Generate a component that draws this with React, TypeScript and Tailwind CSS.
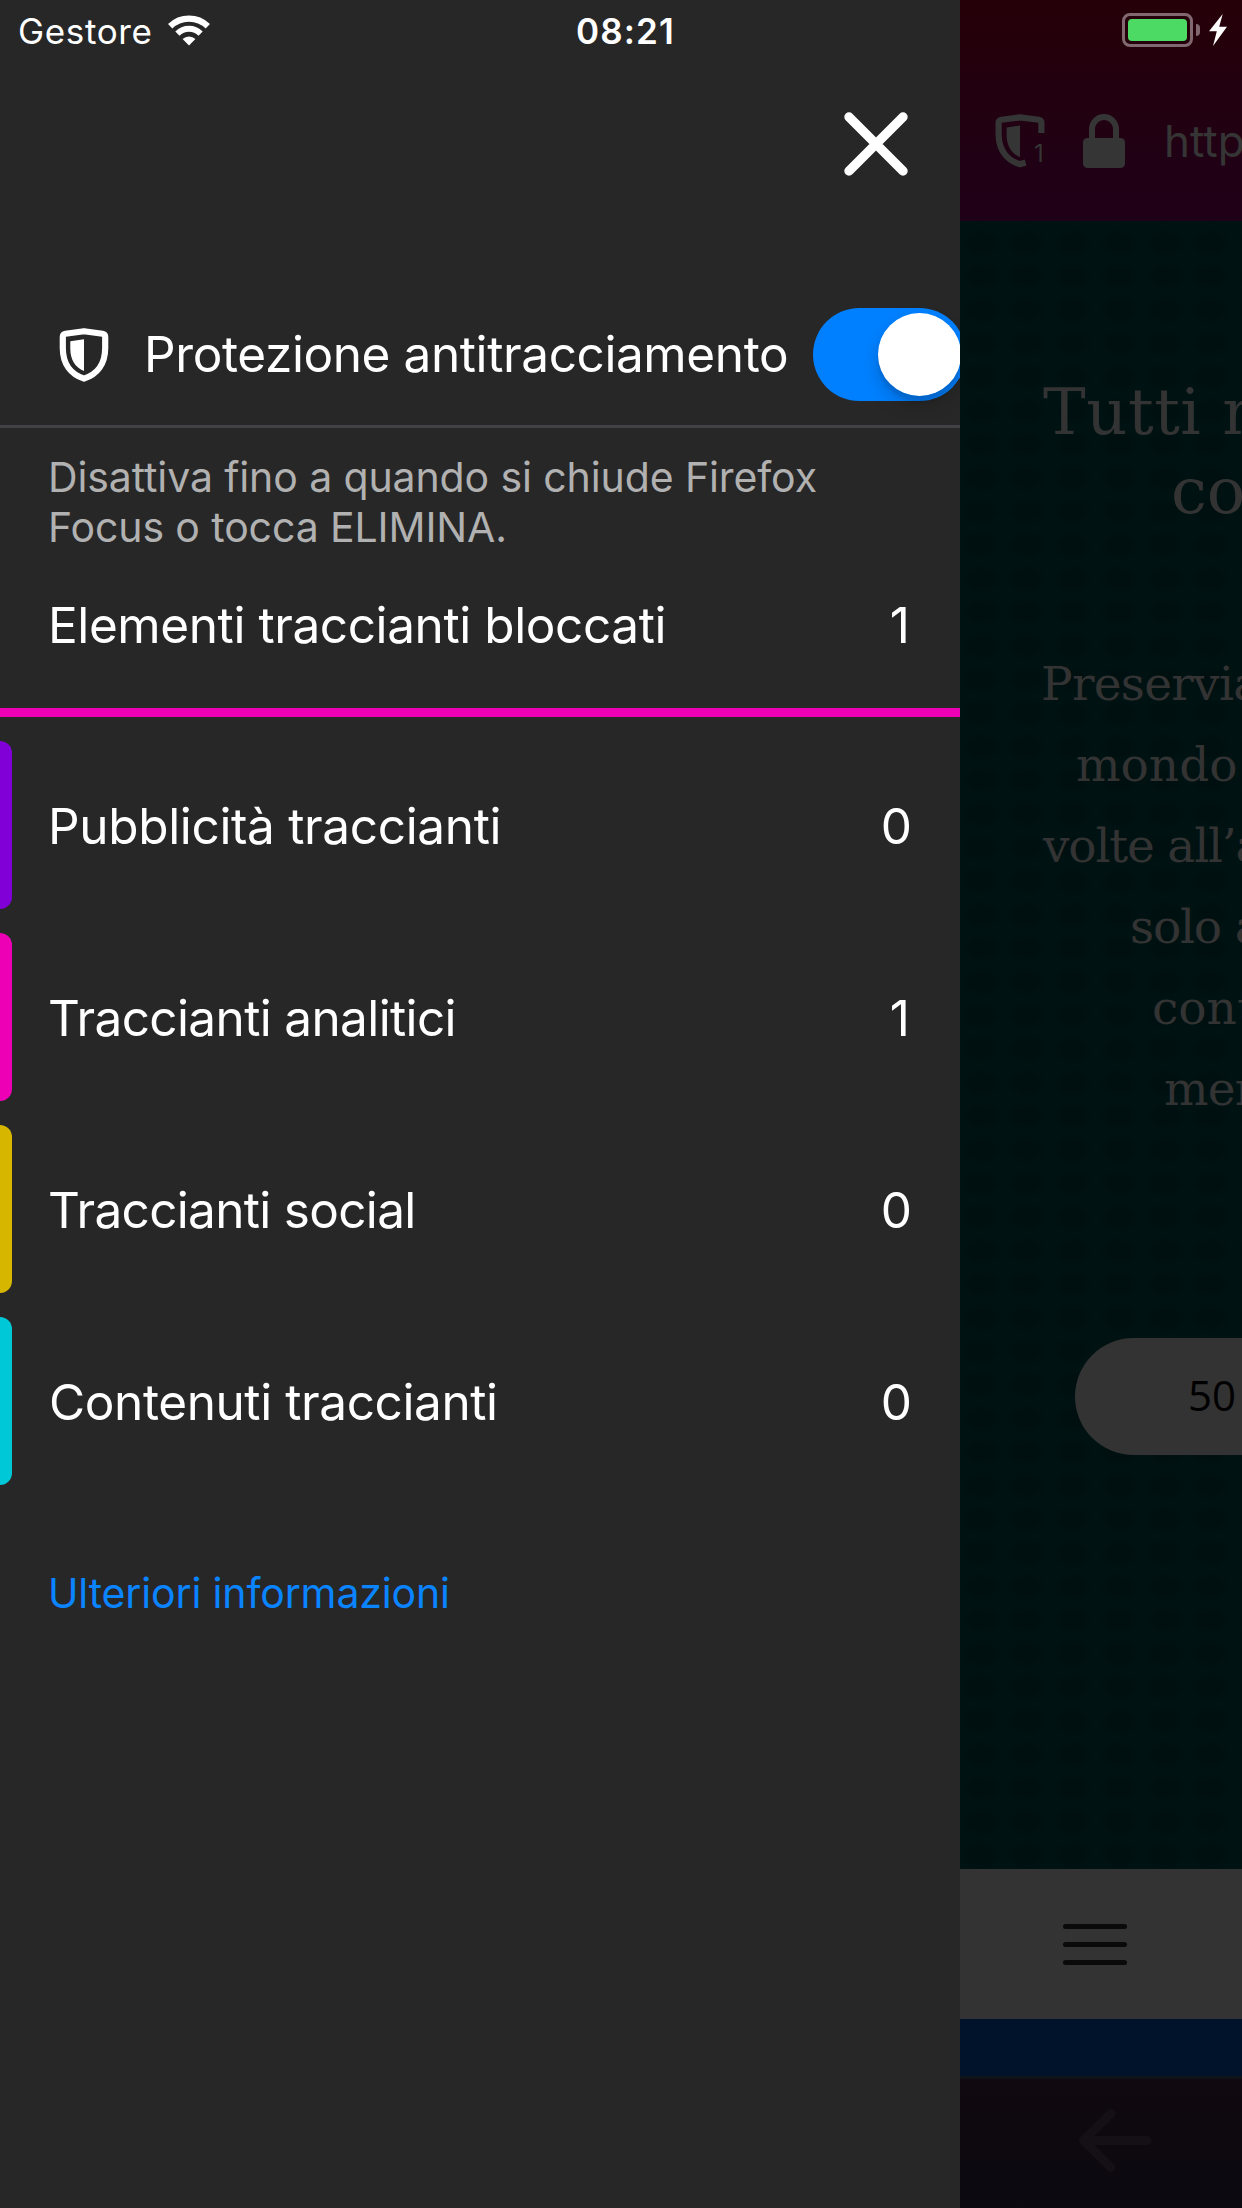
const trackers = [
  { label: 'Pubblicità traccianti', count: 0, bar: 'bg-[#8000d7]', tracking: 'tracking-[-0.34px]', indent: 'pl-[36px]', end: 'pr-[48px]' },
  { label: 'Traccianti analitici', count: 1, bar: 'bg-[#ed00b5]', tracking: 'tracking-[-0.63px]', indent: 'pl-[36px]', end: 'pr-[50px]' },
  { label: 'Traccianti social', count: 0, bar: 'bg-[#d7b600]', tracking: 'tracking-[-0.68px]', indent: 'pl-[36px]', end: 'pr-[48px]' },
  { label: 'Contenuti traccianti', count: 0, bar: 'bg-[#00c8d7]', tracking: 'tracking-[-0.4px]', indent: 'pl-[37px]', end: 'pr-[48px]' },
]

function WifiIcon() {
  return (
    <svg className="shrink-0" width="42" height="31" viewBox="0 0 42 31" fill="none" stroke="currentColor">
      <path d="M2.2 11.3A27 27 0 0 1 39.8 11.3" strokeWidth="6.2" />
      <path d="M9.4 18.6A16.5 16.5 0 0 1 32.6 18.6" strokeWidth="6" />
      <path d="M21 30.5L14.6 24.1A9.2 9.2 0 0 1 27.4 24.1Z" fill="currentColor" stroke="none" />
    </svg>
  )
}

function CloseIcon() {
  return (
    <svg className="shrink-0" width="64" height="64" viewBox="0 0 64 64" fill="none" stroke="currentColor" strokeWidth="9.4" strokeLinecap="round">
      <path d="M5 5L59 59M59 5L5 59" />
    </svg>
  )
}

function ShieldIcon() {
  return (
    <svg className="shrink-0" width="50" height="54" viewBox="0 0 50 54">
      <path
        d="M25 3.2L43.5 5.8Q46.2 6.2 46.2 9V20C46.2 36 38 46.5 25 50.6C12 46.5 3.8 36 3.8 20V9Q3.8 6.2 6.5 5.8Z"
        fill="none" stroke="currentColor" strokeWidth="6.2" strokeLinejoin="round"
      />
      <path d="M25 11.3V43C16 39.5 11.3 31 11.3 21V13.2Z" fill="currentColor" />
    </svg>
  )
}

function ShieldCountIcon() {
  return (
    <svg className="shrink-0" width="50" height="54" viewBox="0 0 50 54">
      <path
        d="M46.4 19V9Q46.4 6.2 43.7 5.8L25 3.4L6.5 5.8Q3.6 6.2 3.6 9V20C3.6 36 12 46.5 25 50.2L30.6 48.6"
        fill="none" stroke="currentColor" strokeWidth="6.2" strokeLinejoin="round"
      />
      <path d="M25 11.5V43C16 39.5 11.6 31 11.6 21V13.4Z" fill="currentColor" />
      <text x="39" y="48" fontSize="24" fill="currentColor" className="font-['Inter',sans-serif]">1</text>
    </svg>
  )
}

function LockIcon() {
  return (
    <svg className="shrink-0" width="42" height="54" viewBox="0 0 42 54">
      <rect x="0" y="24" width="42" height="30" rx="4.5" fill="currentColor" />
      <path d="M9 26V15A12 12 0 0 1 33 15V26" fill="none" stroke="currentColor" strokeWidth="6" />
    </svg>
  )
}

function Battery() {
  return (
    <div className="flex items-center">
      <div className="h-[34px] w-[71px] shrink-0 rounded-[8px] border-3 border-[#816870] p-[3px]">
        <div className="h-full rounded-[4px] bg-[#4cd964]" />
      </div>
      <div className="ml-[3px] h-3 w-1 rounded-r-full bg-[#816870]" />
      <svg className="ml-[9px] shrink-0" width="18" height="32" viewBox="0 0 18 32" fill="#fff">
        <path d="M13.7 0L0 17.2H7.8L4 32L18 12.8H10.2Z" />
      </svg>
    </div>
  )
}

function TrackingPanel() {
  return (
    <section className="flex h-full w-[960px] shrink-0 flex-col overflow-hidden bg-[#272727] font-['Inter',sans-serif] text-white">
      <div className="flex h-[62px] items-center pl-[18px] text-[35px] leading-none">
        <span className="w-[150px] tracking-[0.64px]">Gestore</span>
        <div className="pb-[2px]"><WifiIcon /></div>
        <span className="ml-[366px] font-semibold tracking-[1.14px]">08:21</span>
      </div>
      <div className="flex h-[222px] justify-end pt-[50px] pr-[52px]">
        <CloseIcon />
      </div>
      <div className="flex h-[141px] shrink-0 items-center pl-[59px]">
        <ShieldIcon />
        <h1 className="ml-[35px] w-[669px] shrink-0 pt-px text-[49.5px] leading-none whitespace-nowrap tracking-[-0.4px]">Protezione antitracciamento</h1>
        <div className="flex h-[93px] w-[153px] shrink-0 items-center justify-end rounded-full bg-[#0080ff] pr-[5px]">
          <div className="size-[83px] shrink-0 rounded-full bg-white shadow-[0_9px_18px_rgba(0,0,0,0.18),0_6px_3px_rgba(0,0,0,0.08)]" />
        </div>
      </div>
      <div className="h-[3px] shrink-0 bg-[#424146]" />
      <p className="mt-6 pl-[48px] text-[41px] leading-[50px] tracking-[-0.11px] text-[#b1b1b1]">
        Disattiva fino a quando si chiude Firefox
        <br />
        Focus o tocca ELIMINA.
      </p>
      <div className="flex h-[156px] items-center justify-between pr-[50px] pb-[8px] pl-[48px] text-[49.5px] leading-none">
        <span className="tracking-[-0.41px]">Elementi traccianti bloccati</span>
        <span>1</span>
      </div>
      <div className="h-[9px] shrink-0 bg-[#ed00b5]" />
      <ul className="pt-3 text-[49.5px] leading-none">
        {trackers.map((t) => (
          <li key={t.label} className="flex h-[192px] items-center">
            <div className={`h-[168px] w-3 rounded-r-[12px] ${t.bar}`} />
            <div className={`flex flex-1 items-center justify-between pt-[4px] ${t.indent} ${t.end}`}>
              <span className={t.tracking}>{t.label}</span>
              <span>{t.count}</span>
            </div>
          </li>
        ))}
      </ul>
      <div className="flex h-[192px] items-center pl-[48px]">
        <a className="text-[41px] leading-none tracking-[-0.15px] text-[#0a84ff]">Ulteriori informazioni</a>
      </div>
    </section>
  )
}

function BrowserPage() {
  return (
    <section className="flex h-full min-w-0 flex-1 flex-col overflow-hidden whitespace-nowrap">
      <header className="h-[221px] shrink-0 bg-linear-to-b from-[#260008] to-[#1e0018]">
        <div className="flex h-[62px] items-center pb-[2px] pl-[162px]">
          <Battery />
        </div>
        <div className="flex items-center pt-[52px] pl-[35px] text-[#353535]">
          <ShieldCountIcon />
          <div className="ml-[38px] shrink-0"><LockIcon /></div>
          <span className="ml-[39px] font-['Inter',sans-serif] text-[44px] leading-[54px]">http</span>
        </div>
      </header>
      <main className="h-[1648px] shrink-0 bg-[#001212] bg-[radial-gradient(ellipse_at_center,#000f0f_20%,#001212_62%)] bg-[size:46px_33.6px] bg-[position:-2px_5px] pt-[152px] font-['DejaVu_Serif',serif] text-[#333333]">
        <h2 className="text-[64px] leading-[79px]">
          <div className="pl-[83px] tracking-[0.5px]">Tutti n</div>
          <div className="pl-[211px]">co</div>
        </h2>
        <div className="mt-[112px] text-[47px] leading-[81px]">
          <div className="pl-[81px] tracking-[-0.7px]">Preservia</div>
          <div className="pl-[116px]">mondo</div>
          <div className="pl-[83px] tracking-[-1.2px]">volte all’a</div>
          <div className="pl-[170px] tracking-[-1.2px]">solo a</div>
          <div className="pl-[192px]">cont</div>
          <div className="pl-[204px] tracking-[-0.8px]">men</div>
        </div>
        <div className="mt-[209px] ml-[115px] flex h-[117px] w-[400px] items-center rounded-full bg-[#333333] pb-[3px] pl-[113px] font-['Open_Sans',sans-serif] text-[42px] leading-none text-black">
          50
        </div>
      </main>
      <div className="flex h-[150px] shrink-0 flex-col gap-[13px] bg-[#333333] pt-[55px] pl-[103px]">
        <div className="h-[5px] w-16 rounded-full bg-[#0a0a0a]" />
        <div className="h-[5px] w-16 rounded-full bg-[#0a0a0a]" />
        <div className="h-[5px] w-16 rounded-full bg-[#0a0a0a]" />
      </div>
      <div className="h-[57px] shrink-0 bg-[#00132b]" />
      <div className="h-[3px] shrink-0 bg-[#0e1419]" />
      <footer className="flex h-[129px] shrink-0 bg-linear-to-b from-[#10090f] to-[#0b0910] pt-[29px] pl-[118px] text-[#151015]">
        <svg className="shrink-0" width="74" height="65" viewBox="0 0 74 65" fill="none" stroke="currentColor" strokeWidth="9" strokeLinecap="round" strokeLinejoin="round">
          <path d="M33 5.5L5.5 32.5L33 59.5M5.5 32.5H69" />
        </svg>
      </footer>
    </section>
  )
}

export default function App() {
  return (
    <div className="flex h-[2208px] w-[1242px] overflow-hidden bg-black">
      <TrackingPanel />
      <BrowserPage />
    </div>
  )
}
